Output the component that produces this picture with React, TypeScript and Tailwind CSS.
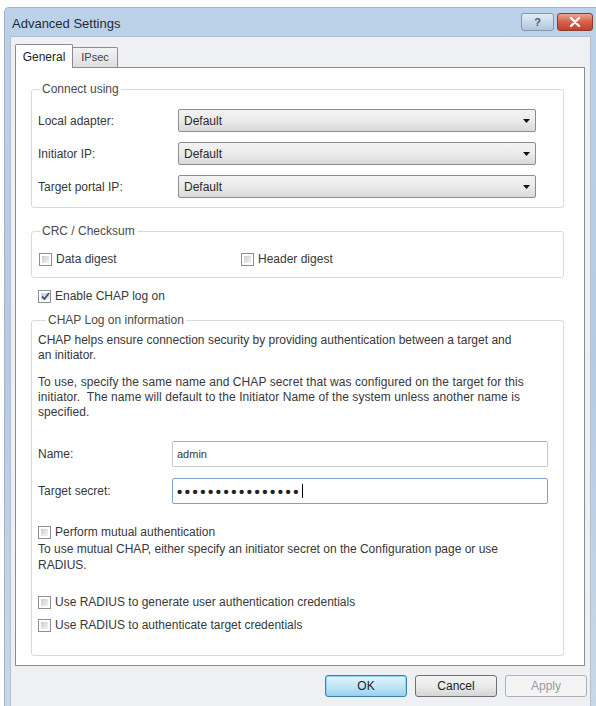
import React from "react";

function Box({ checked = false }: { checked?: boolean }) {
  return (
    <span className="w-[13px] h-[13px] shrink-0 border border-[#8e8f8f] bg-white p-[2px] flex">
      <span className="flex-1 bg-linear-to-br from-[#c9cdd3] to-[#f4f4f4] flex items-center justify-center">
        {checked && (
          <svg width="9" height="9" viewBox="0 0 9 9">
            <path d="M1 4.5 L3.5 7 L8 1" stroke="#3f4f7a" strokeWidth="1.8" fill="none" />
          </svg>
        )}
      </span>
    </span>
  );
}

function Check({ label, checked = false, className = "" }: { label: string; checked?: boolean; className?: string }) {
  return (
    <div className={"flex items-center h-[16px] gap-[4px] " + className}>
      <Box checked={checked} />
      <span>{label}</span>
    </div>
  );
}

function Combo() {
  return (
    <div className="w-[358px] h-[23px] border border-[#8b8d8f] rounded-[2px] bg-linear-to-b from-[#f3f3f3] via-[#ebebeb] to-[#d9d9d9] flex items-center justify-between pl-[5px] pr-[5px]">
      <span className="text-[#2a2a2a]">Default</span>
      <svg width="7" height="4" viewBox="0 0 7 4">
        <path d="M0 0 H7 L3.5 4 Z" fill="#111" />
      </svg>
    </div>
  );
}

function Group({ title, legendMl, children, className = "" }: { title: string; legendMl: string; children: React.ReactNode; className?: string }) {
  return (
    <fieldset className={"w-[533px] border border-[#d5dbe0] rounded-[3px] " + className}>
      <legend className={"px-[2px] leading-[14px] text-[#4a4a4a] " + legendMl}>{title}</legend>
      {children}
    </fieldset>
  );
}

export default function App() {
  return (
    <div className="w-[596px] h-[706px] bg-white pt-[7px] pl-[4px] font-['Liberation_Sans',Arial,sans-serif] text-[12px] text-[#383838]">
      <div className="h-full flex flex-col bg-linear-to-b from-[#bcd2e8] via-[#b4cbe3] to-[#c8d8e8] border-l border-t border-[#9fb3c8] rounded-tl-[5px]">
        {/* title bar */}
        <div className="h-[28px] shrink-0 flex justify-between pl-[7px] pr-[3px]">
          <div className="pt-[8px] text-[13px] leading-[16px] text-[#1c2c40]">Advanced Settings</div>
          <div className="flex gap-[3px] pt-[5px]">
            <div className="w-[33px] h-[18px] rounded-[3px] border border-[#7f97b4] bg-linear-to-b from-[#e3edf7] to-[#b0c6dd] flex items-center justify-center text-[11px] font-bold text-[#4a5a70] leading-none">
              ?
            </div>
            <div className="w-[36px] h-[18px] rounded-[3px] border border-[#8b3a2e] bg-linear-to-b from-[#e8a593] via-[#d5604a] to-[#c2412b] flex items-center justify-center">
              <svg width="12" height="10" viewBox="0 0 12 10">
                <path d="M2 1 L10 9 M10 1 L2 9" stroke="#ffffff" strokeWidth="2.4" strokeLinecap="round" />
              </svg>
            </div>
          </div>
        </div>
        {/* client */}
        <div className="flex-1 ml-[5px] mr-[5px] bg-[#eef0f3] border-l border-t border-r border-[#b3c0cd] pt-[7px] pl-[4px]">
          <div className="flex items-end">
            <div className="relative z-10 w-[58px] h-[24px] -mb-px bg-white border border-b-0 border-[#898c95] rounded-t-[2px] flex items-center justify-center text-[#222]">
              General
            </div>
            <div className="w-[45px] h-[20px] bg-linear-to-b from-[#f3f3f3] to-[#dedede] border border-l-0 border-b-0 border-[#898c95] rounded-tr-[2px] flex items-center justify-center text-[11px] text-[#444]">
              IPsec
            </div>
          </div>
          <div className="w-[570px] bg-white border border-[#898c95] pt-[14px] pl-[15px] pb-[9px]">
            <Group title="Connect using" legendMl="ml-[8px]">
              <div className="mt-[13px] flex flex-col gap-[10px] pl-[6px] pb-[9px]">
                <div className="flex items-center">
                  <span className="w-[140px]">Local adapter:</span>
                  <Combo />
                </div>
                <div className="flex items-center">
                  <span className="w-[140px]">Initiator IP:</span>
                  <Combo />
                </div>
                <div className="flex items-center">
                  <span className="w-[140px]">Target portal IP:</span>
                  <Combo />
                </div>
              </div>
            </Group>
            <Group title="CRC / Checksum" legendMl="ml-[8px]" className="mt-[16px]">
              <div className="mt-[13px] flex pl-[7px] pb-[10px]">
                <Check label="Data digest" className="w-[202px]" />
                <Check label="Header digest" />
              </div>
            </Group>
            <Check label="Enable CHAP log on" checked className="mt-[10px] ml-[7px]" />
            <Group title="CHAP Log on information" legendMl="ml-[14px]" className="mt-[9px]">
              <div className="pl-[6px] pb-[22px]">
                <p className="mt-[6px] leading-[15px]">
                  CHAP helps ensure connection security by providing authentication between a target and
                  <br />
                  an initiator.
                </p>
                <p className="mt-[12px] leading-[15px] tracking-[0.08px]">
                  To use, specify the same name and CHAP secret that was configured on the target for this
                  <br />
                  initiator.&nbsp; The name will default to the Initiator Name of the system unless another name is
                  <br />
                  specified.
                </p>
                <div className="mt-[21px] flex items-center">
                  <span className="w-[134px]">Name:</span>
                  <div className="w-[376px] h-[26px] border border-[#c5c8cc] border-t-[#a9acb2] rounded-[2px] bg-white flex items-center pl-[4px] text-[11px]">
                    admin
                  </div>
                </div>
                <div className="mt-[11px] flex items-center">
                  <span className="w-[134px]">Target secret:</span>
                  <div className="w-[376px] h-[26px] border border-[#7da2ce] rounded-[2px] bg-white flex items-center pl-[4px]">
                    <span className="text-[15px] font-bold tracking-[2.5px] text-[#222] leading-none">••••••••••••••••</span>
                    <span className="w-px h-[14px] bg-black ml-[1px]"></span>
                  </div>
                </div>
                <Check label="Perform mutual authentication" className="mt-[20px]" />
                <p className="mt-[1px] leading-[16px]">
                  To use mutual CHAP, either specify an initiator secret on the Configuration page or use
                  <br />
                  RADIUS.
                </p>
                <Check label="Use RADIUS to generate user authentication credentials" className="mt-[21px]" />
                <Check label="Use RADIUS to authenticate target credentials" className="mt-[7px]" />
              </div>
            </Group>
          </div>
          <div className="flex justify-end gap-[8px] mt-[9px] w-[572px]">
            <div className="w-[82px] h-[22px] rounded-[3px] border border-[#3c7fb1] bg-linear-to-b from-[#e5f4fc] via-[#c4e5f6] to-[#98d1ef] shadow-[inset_0_0_0_1px_#8fd3f5] flex items-center justify-center text-[#222]">
              OK
            </div>
            <div className="w-[82px] h-[22px] rounded-[3px] border border-[#707070] bg-linear-to-b from-[#f2f2f2] via-[#ebebeb] to-[#d5d5d5] flex items-center justify-center text-[#222]">
              Cancel
            </div>
            <div className="w-[82px] h-[22px] rounded-[3px] border border-[#adb2b5] bg-[#f4f4f4] flex items-center justify-center text-[#9a9a9a]">
              Apply
            </div>
          </div>
        </div>
      </div>
    </div>
  );
}
